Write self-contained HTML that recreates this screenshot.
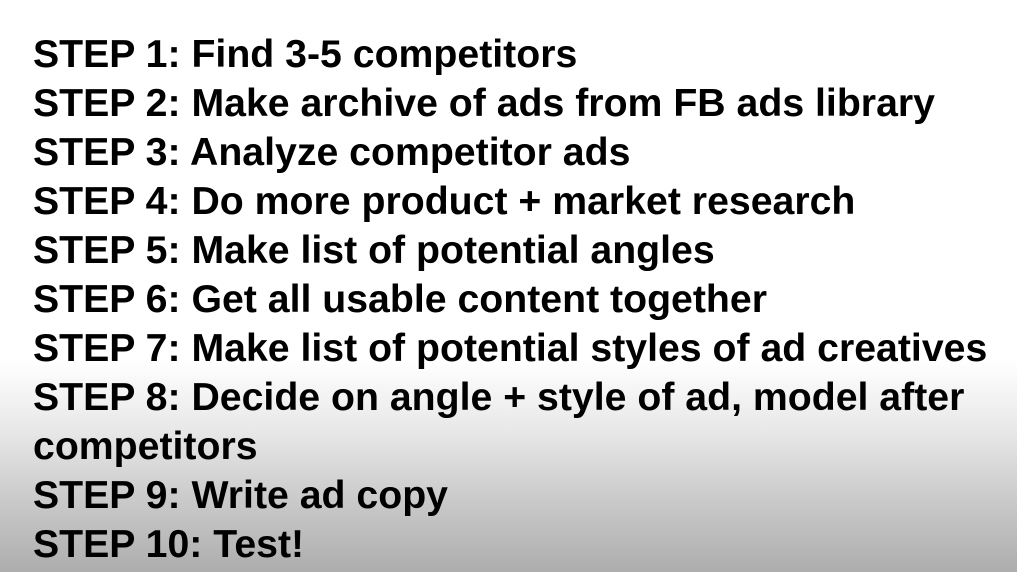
<!DOCTYPE html>
<html><head><meta charset="utf-8"><style>
html,body{margin:0;padding:0}
body{width:1017px;height:572px;overflow:hidden;position:relative;
background:linear-gradient(to bottom,#ffffff 0px,#ffffff 360px,#e8e8e8 430px,#cacaca 500px,#adadad 572px);
font-family:"Liberation Sans",Arial,sans-serif;font-weight:bold;color:#000}
.l{position:absolute;left:33px;font-size:39px;line-height:49px;white-space:nowrap;transform:scaleX(1.006);transform-origin:0 0;letter-spacing:0}
</style></head><body>
<div class="l" style="top:30px">STEP 1: Find 3-5 competitors</div>
<div class="l" style="top:79px">STEP 2: Make archive of ads from FB ads library</div>
<div class="l" style="top:128px">STEP 3: Analyze competitor ads</div>
<div class="l" style="top:177px">STEP 4: Do more product + market research</div>
<div class="l" style="top:226px">STEP 5: Make list of potential angles</div>
<div class="l" style="top:275px">STEP 6: Get all usable content together</div>
<div class="l" style="top:324px">STEP 7: Make list of potential styles of ad creatives</div>
<div class="l" style="top:373px">STEP 8: Decide on angle + style of ad, model after</div>
<div class="l" style="top:422px">competitors</div>
<div class="l" style="top:471px">STEP 9: Write ad copy</div>
<div class="l" style="top:520px">STEP 10: Test!</div>
</body></html>
